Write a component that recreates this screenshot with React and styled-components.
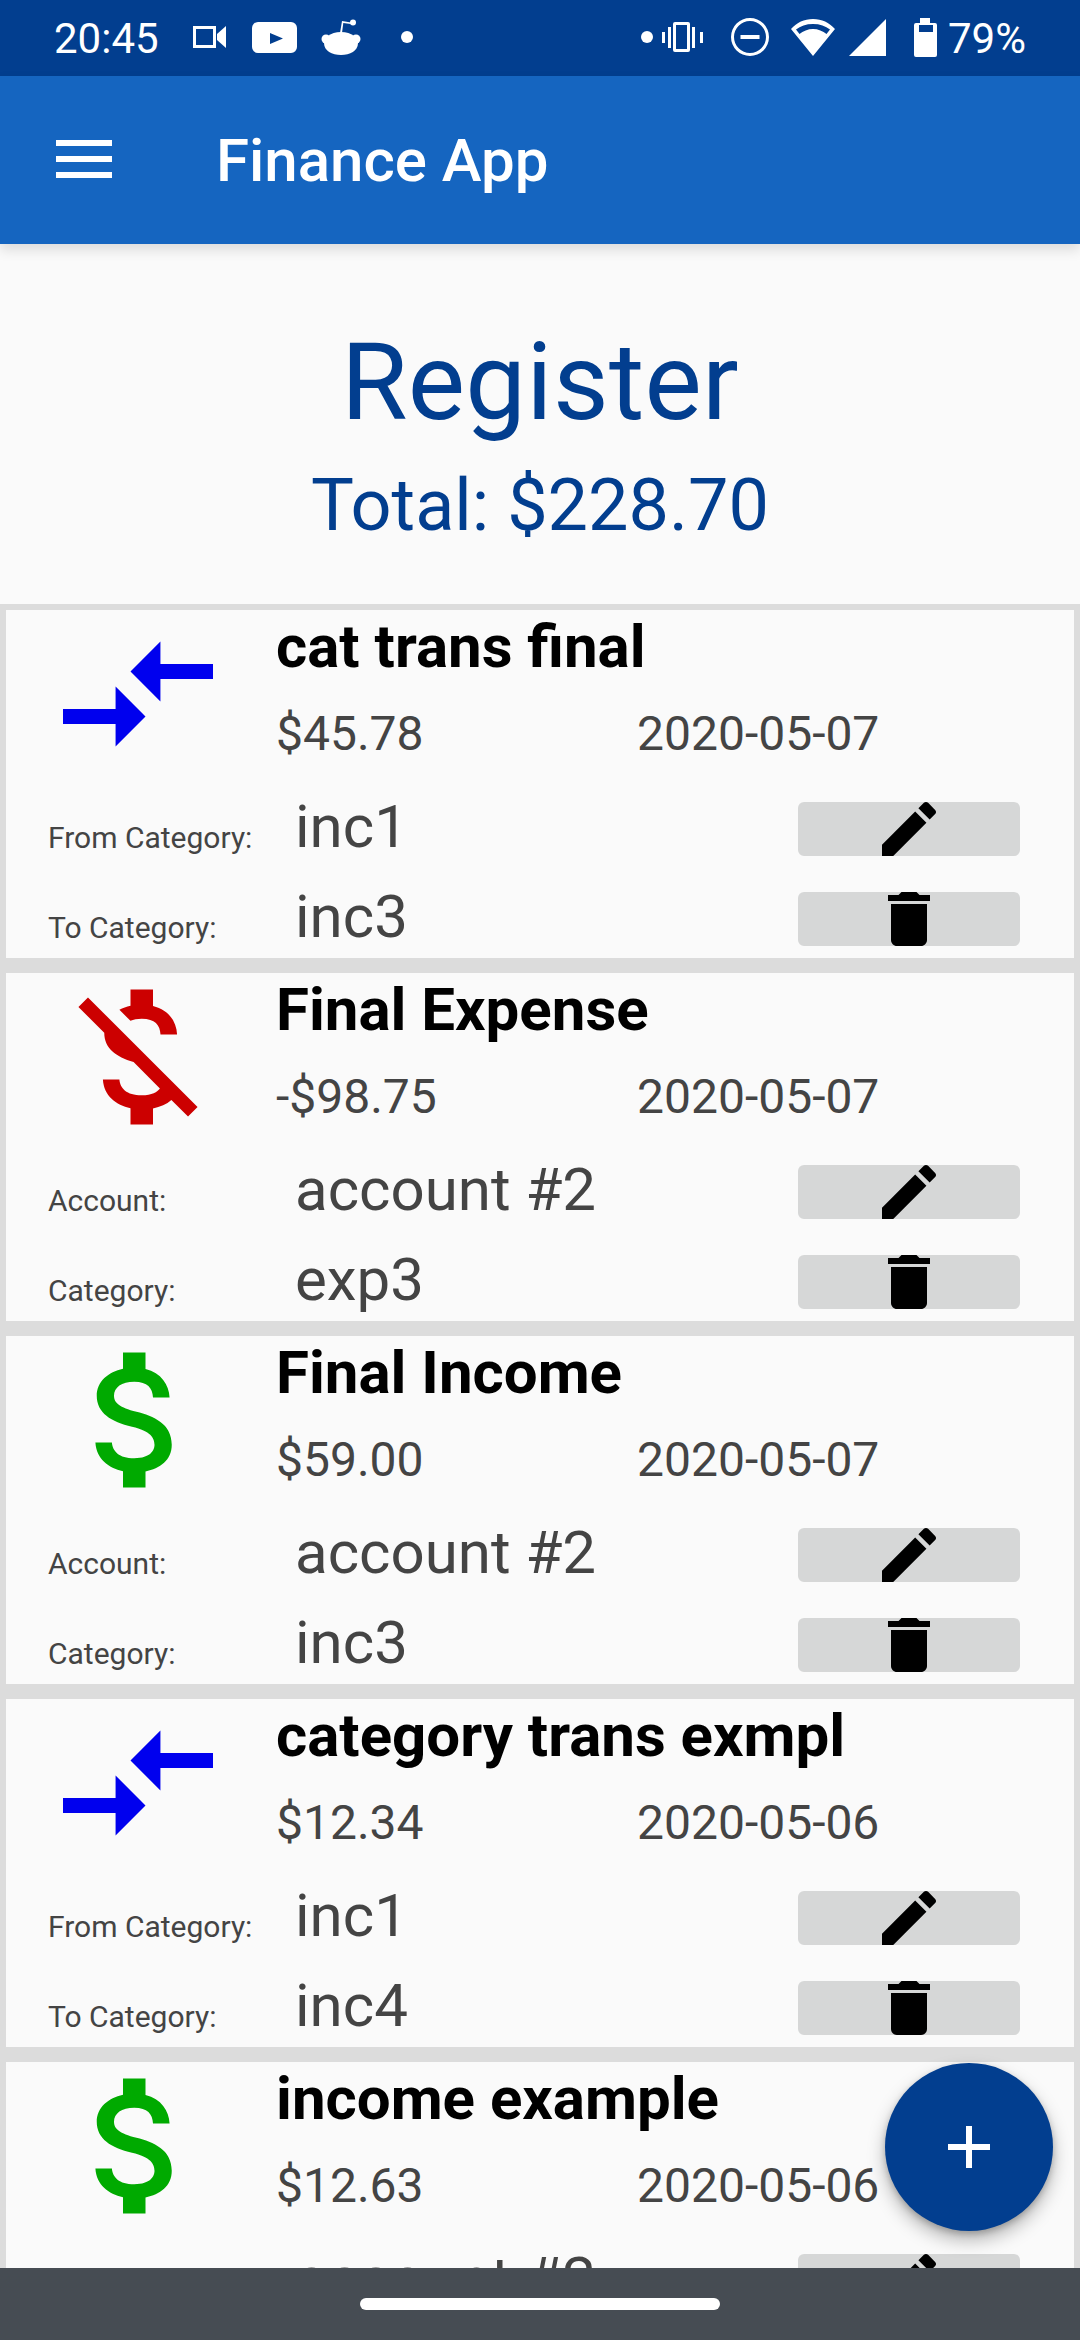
import React from "react";
import styled, { createGlobalStyle } from "styled-components";

const Global = createGlobalStyle`
  html, body { margin: 0; padding: 0; background: #fafafa; }
  * { box-sizing: border-box; }
`;

const Screen = styled.div`
  position: relative; width: 1080px; height: 2340px; overflow: hidden;
  display: flex; flex-direction: column; background: #fafafa;
  font-family: Roboto, "Liberation Sans", sans-serif;
`;
const StatusBar = styled.div`
  height: 76px; flex: none; background: #023e8f; color: #fff;
  display: flex; align-items: center; padding: 0 54px 2px 54px;
`;
const Clock = styled.span`font-size: 42px; font-weight: 400; line-height: 50px; margin-top: 4px;`;
const StatusIcon = styled.svg`flex: none; margin-left: ${p => p.$ml || 0}px; fill: #fff;`;
const Spacer = styled.div`flex: 1;`;
const Battery = styled.span`font-size: 42px; font-weight: 400; line-height: 50px; margin-top: 4px; margin-left: 11px;`;
const AppBar = styled.header`
  height: 168px; flex: none; background: #1565c0; color: #fff; display: flex; align-items: center;
  padding-left: 56px; box-shadow: 0 6px 12px rgba(0,0,0,0.12); position: relative; z-index: 1;
`;
const Menu = styled.svg`width: 56px; height: 38px; flex: none; fill: #fff; margin-top: -2px;`;
const AppTitle = styled.h1`margin: 2px 0 0 104px; font-size: 60px; font-weight: 500; line-height: 70px;`;
const Header = styled.div`height: 360px; flex: none; text-align: center; color: #023e8f; padding-top: 78px;`;
const Register = styled.div`font-size: 108px; line-height: 120px; letter-spacing: 0.3px;`;
const Total = styled.div`font-size: 72px; line-height: 84px; margin-top: 22px;`;
const List = styled.div`flex: none; background: #dcdcdc; padding: 6px; display: flex; flex-direction: column; gap: 15px;`;
const Card = styled.article`height: 348px; flex: none; background: #fafafa; padding-left: 42px; display: flex; flex-direction: column;`;
const Top = styled.div`height: 174px; display: flex; flex: none;`;
const BigIcon = styled.svg`width: 180px; height: 180px; flex: none; margin-top: -6px; fill: ${p => p.$c};`;
const Info = styled.div`margin-left: 48px; flex: 1;`;
const Title = styled.div`font-size: 60px; font-weight: 700; color: #000; line-height: 64px; margin-top: 5px;`;
const Meta = styled.div`display: flex; font-size: 48px; color: #444; line-height: 56px; margin-top: 27px;`;
const Amount = styled.span`width: 361px; flex: none;`;
const Row = styled.div`height: 90px; flex: none; display: flex; align-items: flex-start;`;
const Label = styled.span`width: 247px; flex: none; font-size: 30px; color: #444; line-height: 36px; margin-top: 36px;`;
const Value = styled.span`width: 503px; flex: none; font-size: 60px; color: #444; line-height: 70px; margin-top: 8px;`;
const ActionButton = styled.button`
  width: 222px; height: 54px; border: 0; padding: 0; background: #d6d7d7; border-radius: 6px;
  display: flex; align-items: center; justify-content: center; overflow: visible; margin-top: 18px;
`;
const ActionIcon = styled.svg`width: 72px; height: 72px; flex: none; fill: ${p => p.$c || "#000"};`;
const Fab = styled.button`
  position: absolute; left: 885px; top: 2063px; width: 168px; height: 168px; border-radius: 50%; border: 0; padding: 0;
  background: #023e8f; display: flex; align-items: center; justify-content: center; z-index: 3;
  box-shadow: 0 9px 18px rgba(0,0,0,0.28), 0 3px 6px rgba(0,0,0,0.2);
`;
const NavBar = styled.div`
  position: absolute; left: 0; right: 0; bottom: 0; height: 72px; background: #464c53; z-index: 2;
  display: flex; justify-content: center; padding-top: 30px;
`;
const Pill = styled.div`width: 360px; height: 12px; border-radius: 6px; background: #fff;`;

const P = {
  compare: "M9.01 14H2v2h7.01v3L13 15l-3.99-4v3zm5.98-1v-3H22V8h-7.01V5L11 9l3.99 4z",
  money: "M11.8 10.9c-2.27-.59-3-1.2-3-2.15 0-1.09 1.01-1.85 2.7-1.85 1.78 0 2.44.85 2.5 2.1h2.21c-.07-1.72-1.12-3.3-3.21-3.81V3h-3v2.16c-1.94.42-3.5 1.68-3.5 3.61 0 2.31 1.91 3.46 4.7 4.13 2.5.6 3 1.48 3 2.41 0 .69-.49 1.79-2.7 1.79-2.06 0-2.87-.92-2.98-2.1h-2.2c.12 2.19 1.76 3.42 3.68 3.83V21h3v-2.15c1.95-.37 3.5-1.5 3.5-3.55 0-2.84-2.43-3.81-4.7-4.4z",
  moneyOff: "M12.5 6.9c1.78 0 2.44.85 2.5 2.1h2.21c-.07-1.72-1.12-3.3-3.21-3.81V3h-3v2.16c-.53.12-1.03.3-1.48.54l1.47 1.47c.41-.17.91-.27 1.51-.27zM5.33 4.06L4.06 5.33 7.5 8.77c0 2.08 1.56 3.21 3.91 3.91l3.51 3.51c-.34.48-1.05.91-2.42.91-2.06 0-2.87-.92-2.98-2.1h-2.2c.12 2.19 1.76 3.42 3.68 3.83V21h3v-2.15c.96-.18 1.82-.55 2.45-1.12l2.22 2.22 1.27-1.27L5.33 4.06z",
  edit: "M3 17.25V21h3.75L17.81 9.94l-3.75-3.75L3 17.25zM20.71 7.04c.39-.39.39-1.02 0-1.41l-2.34-2.34c-.39-.39-1.02-.39-1.41 0l-1.83 1.83 3.75 3.75 1.83-1.83z",
  del: "M6 19c0 1.1.9 2 2 2h8c1.1 0 2-.9 2-2V7H6v12zM19 4h-3.5l-1-1h-5l-1 1H5v2h14V4z",
  plus: "M19 13h-6v6h-2v-6H5v-2h6V5h2v6h6v2z",
};

const KIND = {
  transfer: { d: P.compare, c: "#0000ee" },
  expense: { d: P.moneyOff, c: "#cc0000" },
  income: { d: P.money, c: "#00aa00" },
};

const rows = [
  { kind: "transfer", title: "cat trans final", amount: "$45.78", date: "2020-05-07", l1: "From Category:", v1: "inc1", l2: "To Category:", v2: "inc3" },
  { kind: "expense", title: "Final Expense", amount: "-$98.75", date: "2020-05-07", l1: "Account:", v1: "account #2", l2: "Category:", v2: "exp3" },
  { kind: "income", title: "Final Income", amount: "$59.00", date: "2020-05-07", l1: "Account:", v1: "account #2", l2: "Category:", v2: "inc3" },
  { kind: "transfer", title: "category trans exmpl", amount: "$12.34", date: "2020-05-06", l1: "From Category:", v1: "inc1", l2: "To Category:", v2: "inc4" },
  { kind: "income", title: "income example", amount: "$12.63", date: "2020-05-06", l1: "Account:", v1: "account #2", l2: "Category:", v2: "inc4" },
];

function Entry({ r }) {
  const k = KIND[r.kind];
  return (
    <Card>
      <Top>
        <BigIcon viewBox="0 0 24 24" $c={k.c}><path d={k.d} /></BigIcon>
        <Info>
          <Title>{r.title}</Title>
          <Meta><Amount>{r.amount}</Amount><span>{r.date}</span></Meta>
        </Info>
      </Top>
      <Row>
        <Label>{r.l1}</Label><Value>{r.v1}</Value>
        <ActionButton aria-label="edit"><ActionIcon viewBox="0 0 24 24"><path d={P.edit} /></ActionIcon></ActionButton>
      </Row>
      <Row>
        <Label>{r.l2}</Label><Value>{r.v2}</Value>
        <ActionButton aria-label="delete"><ActionIcon viewBox="0 0 24 24"><path d={P.del} /></ActionIcon></ActionButton>
      </Row>
    </Card>
  );
}

export default function App() {
  return (
    <Screen>
      <Global />
      <StatusBar>
        <Clock>20:45</Clock>
        <StatusIcon $ml={34} width="33" height="22" viewBox="0 0 33 22">
          <path fillRule="evenodd" d="M0 0h23v22H0zM3 3v16h17V3z" />
          <path d="M24 8l9-8v22l-9-8z" />
        </StatusIcon>
        <StatusIcon $ml={26} width="45" height="31" viewBox="0 0 45 31">
          <path fillRule="evenodd" d="M6 0h33a6 6 0 0 1 6 6v19a6 6 0 0 1-6 6H6a6 6 0 0 1-6-6V6a6 6 0 0 1 6-6zM18 11v11l13-5.500z" />
        </StatusIcon>
        <StatusIcon $ml={24} width="40" height="36" viewBox="0 0 40 36">
          <circle cx="5" cy="20" r="4.500" /><circle cx="35" cy="20" r="4.500" />
          <path d="M20 13c11 0 17 6 17 11 0 8-8 12-17 12S3 32 3 24c0-5 6-11 17-11z" />
          <path d="M19 14l2-12 9 1.500-.3 1.600-7.400-1.200L21 14z" /><circle cx="32" cy="3.500" r="3" />
        </StatusIcon>
        <StatusIcon $ml={40} width="12" height="12" viewBox="0 0 12 12"><circle cx="6" cy="6" r="6" /></StatusIcon>
        <Spacer />
        <StatusIcon width="12" height="12" viewBox="0 0 12 12"><circle cx="6" cy="6" r="6" /></StatusIcon>
        <StatusIcon $ml={9} width="41" height="30" viewBox="0 0 41 30">
          <path fillRule="evenodd" d="M13 0h13a2 2 0 0 1 2 2v26a2 2 0 0 1-2 2H13a2 2 0 0 1-2-2V2a2 2 0 0 1 2-2zM14 3v24h11V3z" />
          <path d="M6 5h3v21H6zM0 10h3v11H0zM30 5h3v21h-3zM38 10h3v11h-3z" />
        </StatusIcon>
        <StatusIcon $ml={28} width="38" height="38" viewBox="0 0 38 38">
          <path fillRule="evenodd" d="M19 0a19 19 0 1 1 0 38 19 19 0 0 1 0-38zm0 3a16 16 0 1 0 0 32 16 16 0 0 0 0-32z" />
          <rect x="9.500" y="17" width="19" height="4" />
        </StatusIcon>
        <StatusIcon $ml={22} width="44" height="37" viewBox="0 0 44 37">
          <path fillRule="evenodd" d="M22 0C13 0 6 3.500 0 10l22 27 22-27C38 3.500 31 0 22 0zm0 5C15 5 9.500 7 5 10.500L8.500 15C12 12 17 10 22 10s10 2 13.500 5l3.500-4.500C34.500 7 29 5 22 5z" />
        </StatusIcon>
        <StatusIcon $ml={14} width="37" height="37" viewBox="0 0 37 37"><path d="M37 0v37H0z" /></StatusIcon>
        <StatusIcon $ml={28} width="23" height="39" viewBox="0 0 23 39">
          <path fillRule="evenodd" d="M6 0h10v5h5a2 2 0 0 1 2 2v30a2 2 0 0 1-2 2H2a2 2 0 0 1-2-2V7a2 2 0 0 1 2-2h4zM5 7v7h14V7z" />
        </StatusIcon>
        <Battery>79%</Battery>
      </StatusBar>
      <AppBar>
        <Menu viewBox="0 0 56 38"><rect width="56" height="6" /><rect y="16" width="56" height="6" /><rect y="32" width="56" height="6" /></Menu>
        <AppTitle>Finance App</AppTitle>
      </AppBar>
      <Header>
        <Register>Register</Register>
        <Total>Total: $228.70</Total>
      </Header>
      <List>{rows.map(r => <Entry key={r.title} r={r} />)}</List>
      <Fab aria-label="add"><ActionIcon $c="#fff" viewBox="0 0 24 24"><path d={P.plus} /></ActionIcon></Fab>
      <NavBar><Pill /></NavBar>
    </Screen>
  );
}
